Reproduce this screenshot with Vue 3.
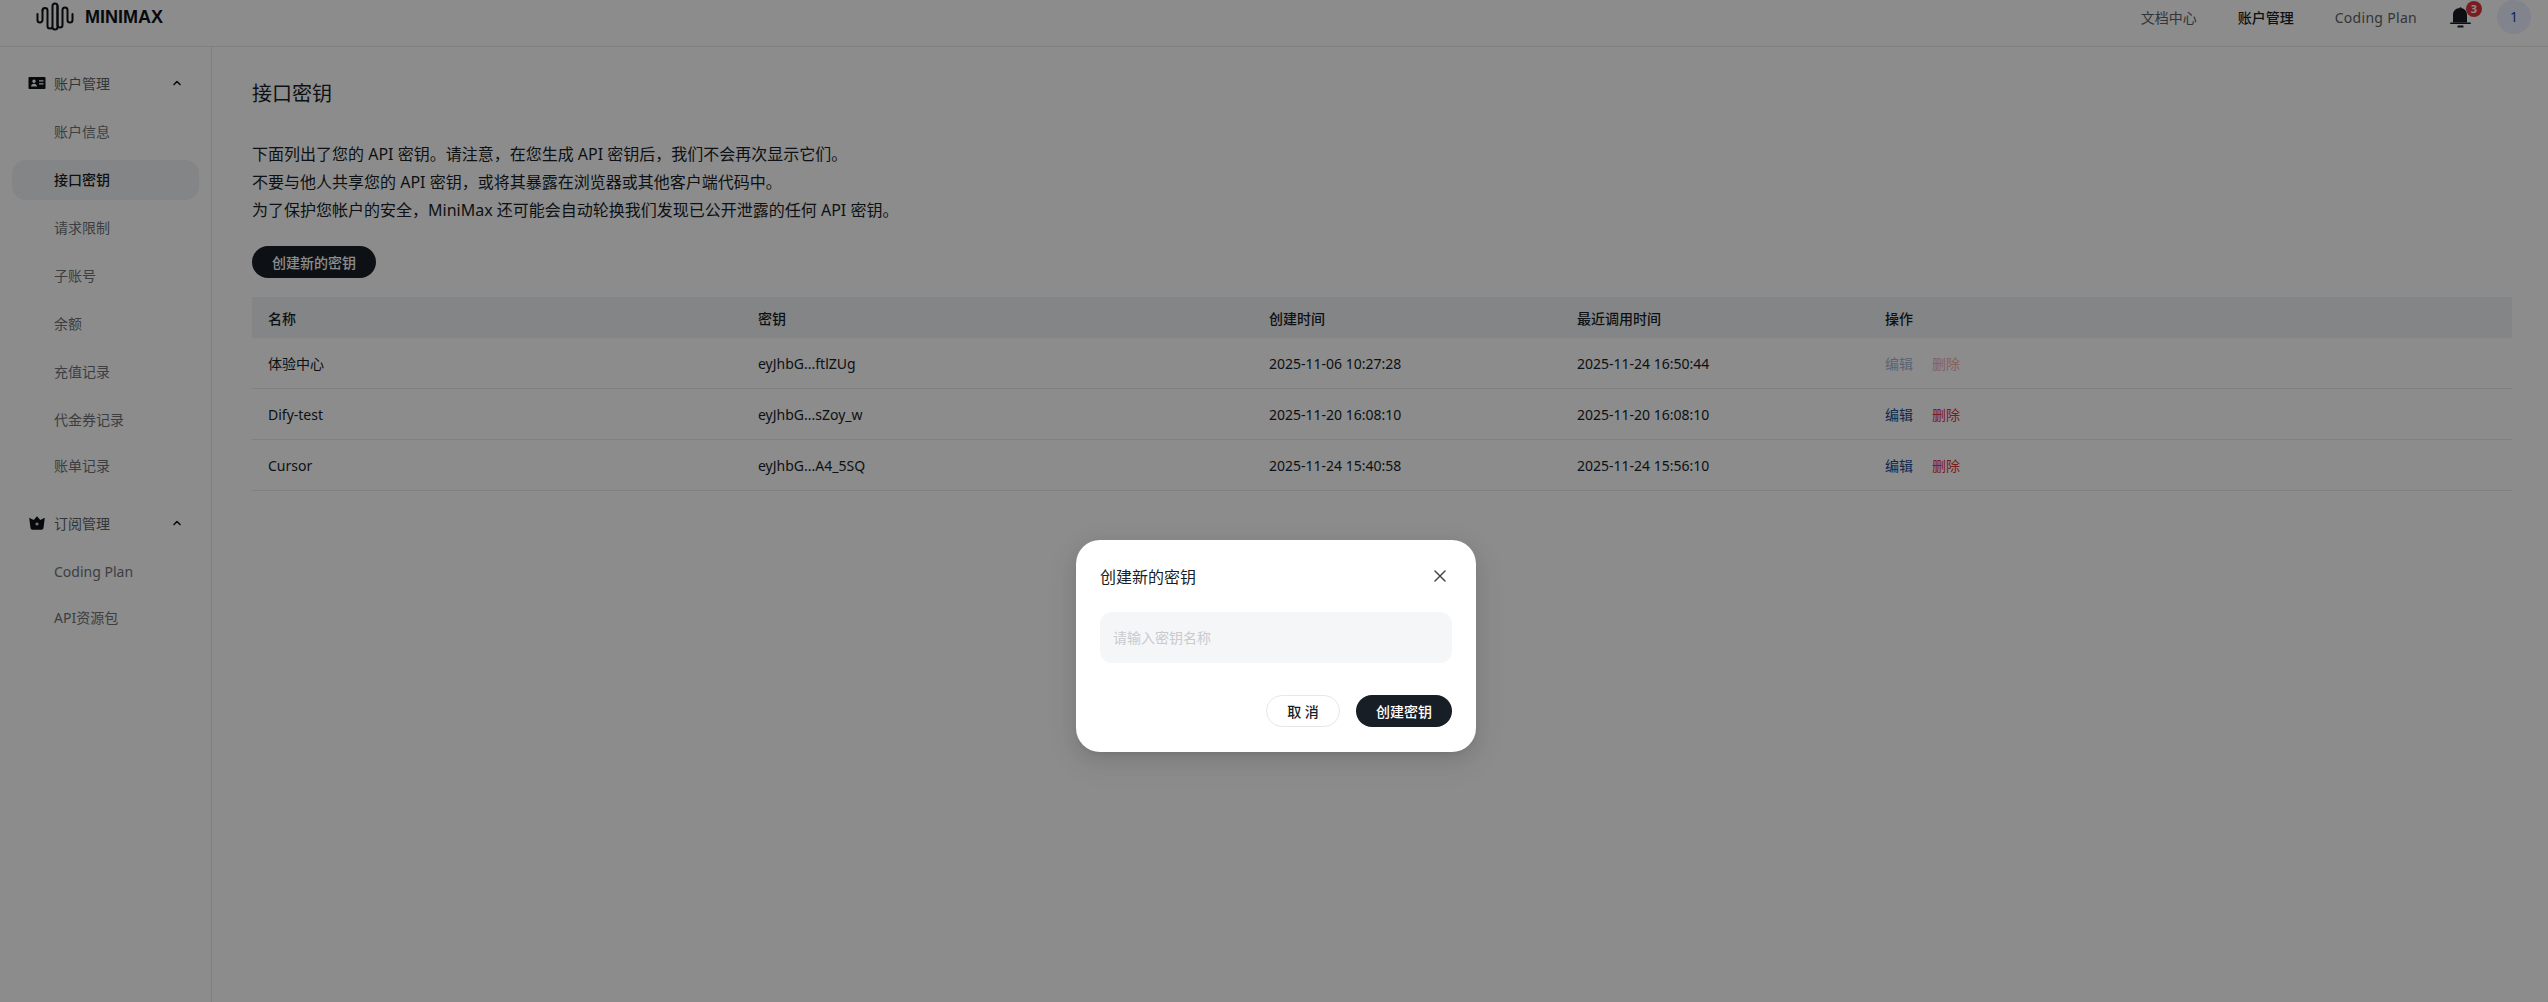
<template>
  <div class="page">
    <header class="topbar">
      <div class="logo">
        <svg class="logo-wave" viewBox="0 0 38 32" width="38" height="32" fill="none" stroke="#0e1116" stroke-width="2" stroke-linecap="round" stroke-linejoin="round">
          <path d="M1.500 13v6a2.500 2.500 0 0 0 5 0V9.500" />
          <path d="M6.500 9.500a2.500 2.500 0 0 1 5 0V25a2.500 2.500 0 0 0 5 0V5a2.500 2.500 0 0 1 5 0v21a2.500 2.500 0 0 1-5 0" />
          <path d="M21.500 5v19a2.500 2.500 0 0 0 5 0V9a2.500 2.500 0 0 1 5 0v10a2.500 2.500 0 0 0 5 0v-6" />
        </svg>
        <span class="logo-text">MINIMAX</span>
      </div>
      <nav class="topnav">
        <a class="topnav-link">文档中心</a>
        <a class="topnav-link topnav-link--active">账户管理</a>
        <a class="topnav-link topnav-link--plan">Coding Plan</a>
        <div class="bell">
          <svg viewBox="0 0 21 21" width="21" height="21" fill="#171b22">
            <path d="M9.400 1.300a1.100 1.100 0 0 1 2.200 0c3.400.5 5.400 3.200 5.400 6.700v7.500H3V8c0-3.500 2-6.200 5.400-6.700z" />
            <rect x="0" y="15.500" width="21" height="1.600" rx=".8" />
            <rect x="7.500" y="18.400" width="6" height="2" rx=".5" />
          </svg>
          <span class="bell-badge">3</span>
        </div>
        <div class="avatar">1</div>
      </nav>
    </header>

    <div class="body">
      <aside class="sidebar">
        <div v-for="group in menu" :key="group.title" class="menu-group">
          <div class="menu-head">
            <svg v-if="group.icon === 'card'" class="menu-icon" viewBox="0 0 18 14" width="18" height="14">
              <path fill="#0e1116" fill-rule="evenodd" d="M1.500 1h15A1 1 0 0 1 17.500 2v10a1 1 0 0 1-1 1h-15a1 1 0 0 1-1-1V2a1 1 0 0 1 1-1zM6 3.500a1.700 1.700 0 1 0 0 3.400 1.700 1.700 0 0 0 0-3.400zM3 10.500h6c0-1.700-1.300-2.800-3-2.800s-3 1.100-3 2.800zM11 4.200v1.300h4.500V4.200zM11 7.200v1.300h4.500V7.200z" />
            </svg>
            <svg v-else class="menu-icon" viewBox="0 0 18 14" width="18" height="14">
              <path fill="#0e1116" fill-rule="evenodd" d="M9 .2l3.300 3.700L16.800 1.800l-1.300 10.200a2 2 0 0 1-2 1.800h-9a2 2 0 0 1-2-1.800L1.200 1.800l4.500 2.100zM8.400 6.400v1.100H7.300v1h1.100v1.100h1.200V8.500h1.100v-1H9.600V6.400z" />
            </svg>
            <span class="menu-title">{{ group.title }}</span>
            <svg class="menu-caret" viewBox="0 0 8 6" width="8" height="6" fill="none" stroke="#0e1116" stroke-width="1.500" stroke-linecap="round" stroke-linejoin="round">
              <path d="M1 4.500L4 1.500l3 3" />
            </svg>
          </div>
          <a
            v-for="item in group.items"
            :key="item"
            class="menu-item"
            :class="{ 'menu-item--active': item === '接口密钥' }"
          >{{ item }}</a>
        </div>
      </aside>

      <main class="content">
        <h1 class="title">接口密钥</h1>
        <div class="desc">
          <p>下面列出了您的 API 密钥。请注意，在您生成 API 密钥后，我们不会再次显示它们。</p>
          <p>不要与他人共享您的 API 密钥，或将其暴露在浏览器或其他客户端代码中。</p>
          <p>为了保护您帐户的安全，MiniMax 还可能会自动轮换我们发现已公开泄露的任何 API 密钥。</p>
        </div>
        <button type="button" class="create-btn">创建新的密钥</button>

        <div class="table">
          <div class="row row--head">
            <span>名称</span>
            <span>密钥</span>
            <span>创建时间</span>
            <span>最近调用时间</span>
            <span>操作</span>
          </div>
          <div v-for="row in rows" :key="row.name" class="row">
            <span>{{ row.name }}</span>
            <span>{{ row.key }}</span>
            <span>{{ row.created }}</span>
            <span>{{ row.used }}</span>
            <span class="actions" :class="{ 'actions--disabled': row.locked }">
              <a class="action-edit">编辑</a>
              <a class="action-del">删除</a>
            </span>
          </div>
        </div>
      </main>
    </div>

    <div class="mask">
      <section class="modal">
        <div class="modal-head">
          <h3 class="modal-title">创建新的密钥</h3>
          <svg class="modal-close" viewBox="0 0 12 12" width="12" height="12" fill="none" stroke="#45494f" stroke-width="1.500" stroke-linecap="round">
            <path d="M1 1l10 10M11 1L1 11" />
          </svg>
        </div>
        <input class="modal-input" type="text" placeholder="请输入密钥名称" />
        <div class="modal-foot">
          <button type="button" class="btn btn--cancel">取 消</button>
          <button type="button" class="btn btn--ok">创建密钥</button>
        </div>
      </section>
    </div>
  </div>
</template>

<script setup>
const menu = [
  {
    title: '账户管理',
    icon: 'card',
    items: ['账户信息', '接口密钥', '请求限制', '子账号', '余额', '充值记录', '代金券记录', '账单记录'],
  },
  {
    title: '订阅管理',
    icon: 'crown',
    items: ['Coding Plan', 'API资源包'],
  },
]

const rows = [
  { name: '体验中心', key: 'eyJhbG...ftlZUg', created: '2025-11-06 10:27:28', used: '2025-11-24 16:50:44', locked: true },
  { name: 'Dify-test', key: 'eyJhbG...sZoy_w', created: '2025-11-20 16:08:10', used: '2025-11-20 16:08:10', locked: false },
  { name: 'Cursor', key: 'eyJhbG...A4_5SQ', created: '2025-11-24 15:40:58', used: '2025-11-24 15:56:10', locked: false },
]
</script>

<style>
html,
body {
  margin: 0;
  background: #fff;
}
</style>

<style scoped>
.page {
  position: relative;
  height: 1002px;
  overflow: hidden;
  background: #fff;
  color: #181e25;
  font-family: "Noto Sans", "Noto Sans CJK SC", sans-serif;
  font-size: 14px;
  display: flex;
  flex-direction: column;
}

.topbar {
  flex: none;
  height: 34px;
  padding: 0 17px 12px 36px;
  border-bottom: 1px solid #e9eaec;
  display: flex;
  align-items: center;
  justify-content: space-between;
}

.logo {
  display: flex;
  align-items: center;
  gap: 11px;
}

.logo-wave {
  display: block;
}

.logo-text {
  font-family: "Liberation Sans", sans-serif;
  font-size: 18px;
  font-weight: 700;
  color: #0e1116;
}

.topnav {
  display: flex;
  align-items: center;
}

.topnav-link {
  margin-right: 41px;
  color: #5f6268;
}

.topnav-link--active {
  color: #181e25;
  font-weight: 500;
}

.topnav-link--plan {
  margin-right: 33px;
  letter-spacing: 0.3px;
}

.bell {
  position: relative;
  width: 21px;
  height: 21px;
  margin-right: 26px;
}

.bell svg {
  display: block;
}

.bell-badge {
  position: absolute;
  top: -6px;
  left: 16px;
  width: 16px;
  height: 16px;
  border-radius: 50%;
  background: #e0343c;
  color: #fff;
  font-size: 11px;
  font-weight: 700;
  line-height: 16px;
  text-align: center;
}

.avatar {
  width: 34px;
  height: 34px;
  border-radius: 50%;
  background: #ecf0ff;
  color: #1d3fae;
  text-align: center;
  line-height: 34px;
}

.body {
  flex: 1;
  display: flex;
  min-height: 0;
}

.sidebar {
  flex: none;
  width: 187px;
  padding: 12px 12px 0;
  border-right: 1px solid #e9eaec;
}

.menu-group {
  margin-bottom: 13px;
}

.menu-head {
  height: 48px;
  margin-bottom: 5px;
  padding: 0 18px 0 16px;
  display: flex;
  align-items: center;
  gap: 8px;
}

.menu-icon {
  flex: none;
}

.menu-title {
  flex: 1;
  color: #5f6268;
}

.menu-caret {
  flex: none;
}

.menu-item {
  display: block;
  height: 40px;
  margin-bottom: 8px;
  padding-left: 42px;
  border-radius: 14px;
  line-height: 40px;
  color: #6f7278;
}

.menu-item:last-child {
  margin-top: -2px;
}

.menu-item--active {
  background: #f1f2f4;
  color: #181e25;
  font-weight: 500;
}

.content {
  flex: 1;
  min-width: 0;
  padding: 33px 36px 0 40px;
}

.title {
  margin: 0;
  font-size: 20px;
  font-weight: 400;
  line-height: 28px;
  color: #181e25;
}

.desc {
  margin-top: 32px;
  font-size: 16px;
  line-height: 28px;
}

.desc p {
  margin: 0;
}

.create-btn {
  display: block;
  width: 124px;
  height: 32px;
  margin-top: 22px;
  border: none;
  border-radius: 16px;
  background: #181e25;
  color: #fff;
  font: 500 14px "Noto Sans", "Noto Sans CJK SC", sans-serif;
}

.table {
  margin-top: 19px;
}

.row {
  display: grid;
  grid-template-columns: 490px 511px 308px 308px 1fr;
  align-items: center;
  height: 50px;
  padding-left: 16px;
  border-bottom: 1px solid #e9eaec;
}

.row--head {
  height: 41px;
  border-bottom: none;
  background: #f1f2f4;
  font-weight: 500;
}

.actions {
  display: flex;
  gap: 19px;
}

.action-edit {
  color: #164a90;
}

.action-del {
  color: #e0343c;
}

.actions--disabled a {
  opacity: 0.4;
}

.mask {
  position: absolute;
  inset: 0;
  z-index: 10;
  padding: 540px 0 0 4px;
  background: rgba(0, 0, 0, 0.45);
  display: flex;
  justify-content: center;
  align-items: flex-start;
}

.modal {
  width: 352px;
  height: 164px;
  padding: 24px;
  border-radius: 24px;
  background: #fff;
  box-shadow: 0 6px 16px rgba(0, 0, 0, 0.08), 0 3px 6px -4px rgba(0, 0, 0, 0.12), 0 9px 28px 8px rgba(0, 0, 0, 0.05);
}

.modal-head {
  height: 24px;
  padding-right: 6px;
  display: flex;
  align-items: center;
  justify-content: space-between;
}

.modal-title {
  margin: 0;
  font-size: 16px;
  font-weight: 400;
  color: #181e25;
}

.modal-input {
  display: block;
  box-sizing: border-box;
  width: 100%;
  height: 51px;
  margin-top: 24px;
  padding: 0 13px;
  border: none;
  border-radius: 12px;
  outline: none;
  background: #f5f6f8;
  font: 14px "Noto Sans", "Noto Sans CJK SC", sans-serif;
}

.modal-input::placeholder {
  color: #c9cacd;
}

.modal-foot {
  margin-top: 32px;
  display: flex;
  justify-content: flex-end;
  gap: 16px;
}

.btn {
  height: 32px;
  border-radius: 16px;
  font: 500 14px "Noto Sans", "Noto Sans CJK SC", sans-serif;
}

.btn--cancel {
  width: 74px;
  border: 1px solid #e6e7ea;
  background: #fff;
  color: #181e25;
}

.btn--ok {
  width: 96px;
  border: none;
  background: #181e25;
  color: #fff;
}
</style>
